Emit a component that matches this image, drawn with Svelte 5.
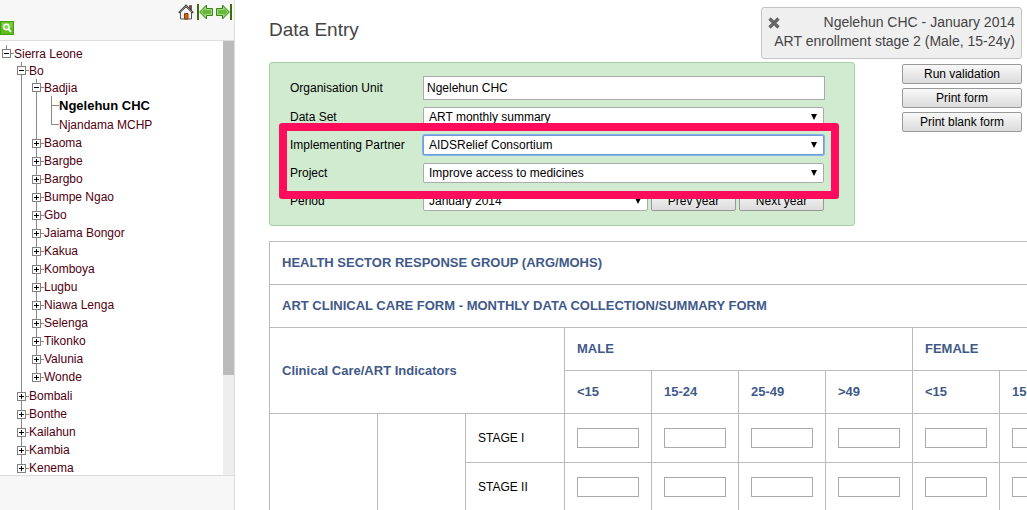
<script>
  const districts = ['Bombali', 'Bonthe', 'Kailahun', 'Kambia', 'Kenema'];
  const chiefdoms = [
    'Baoma', 'Bargbe', 'Bargbo', 'Bumpe Ngao', 'Gbo', 'Jaiama Bongor', 'Kakua',
    'Komboya', 'Lugbu', 'Niawa Lenga', 'Selenga', 'Tikonko', 'Valunia', 'Wonde'
  ];
  const ages = ['<15', '15-24', '25-49', '>49'];
  const columns = ['Male', 'Female'].flatMap((sex) => ages.map((age) => ({ sex, age })));
  const stages = ['STAGE I', 'STAGE II'];
  let unit = $state('Ngelehun CHC');
</script>

{#snippet branch(name, open)}
  <div class="row" class:open>
    <button class="toggle" aria-label={(open ? 'Collapse ' : 'Expand ') + name}>
      <svg viewBox="0 0 9 9" width="9" height="9" shape-rendering="crispEdges">
        <rect x="0.5" y="0.5" width="8" height="8" fill="#fff" stroke="#808080" />
        <path d={open ? 'M2 4.5h5' : 'M2 4.5h5M4.5 2v5'} stroke="#000" />
      </svg>
    </button>
    <span class="dash"></span>
    <a href="#unit">{name}</a>
  </div>
{/snippet}

<div class="shell">
  <aside>
    <div class="tools">
      <div class="nav">
        <button class="icon" aria-label="Home">
          <svg viewBox="0 0 16 16" width="16" height="16">
            <path d="M11.500 1.500h2v5h-2z" fill="#a33" stroke="#444" stroke-width=".7" />
            <path d="M2.500 8v7h11V8L8 3z" fill="#f4f4f4" stroke="#555" />
            <path d="M.8 8.800 8 1.600l7.200 7.200" fill="none" stroke="#444" stroke-width="1.800" />
            <path d="M1.800 8.200 8 2l6.200 6.200" fill="none" stroke="#bbb" stroke-width=".6" />
            <path d="M6.500 9.500H10V15H6.500z" fill="#d9680d" stroke="#81380a" />
          </svg>
        </button>
        <button class="icon" aria-label="Hide menu">
          <svg viewBox="0 0 16 16" width="16" height="16">
            <path d="M1 0v16" stroke="#347500" stroke-width="2" />
            <path d="M2.700 8 9.500 1V4.500h6v7h-6V15z" fill="#67b93b" stroke="#3b8419" />
            <path d="M4.200 8 8.500 3.500v2h6v5h-6v2z" fill="none" stroke="#a5dc80" />
          </svg>
        </button>
        <button class="icon" aria-label="Show menu">
          <svg viewBox="0 0 16 16" width="16" height="16">
            <path d="M15 0v16" stroke="#347500" stroke-width="2" />
            <path d="M13.300 8 6.500 1V4.500h-6v7h6V15z" fill="#67b93b" stroke="#3b8419" />
            <path d="M11.800 8 7.500 3.500v2h-6v5h6v2z" fill="none" stroke="#a5dc80" />
          </svg>
        </button>
      </div>
      <button class="icon" aria-label="Search">
        <svg viewBox="0 0 14 14" width="14" height="14">
          <rect x=".5" y=".5" width="13" height="13" fill="#5dbb1c" stroke="#42a012" />
          <path d="M1.500 1.500h11v5h-11z" fill="#7acb3e" />
          <circle cx="6.300" cy="6" r="2.800" fill="#8ed45c" stroke="#fff" stroke-width="1.400" />
          <path d="m8.500 8.200 2.500 2.700" stroke="#fff" stroke-width="1.900" />
        </svg>
      </button>
    </div>
    <div class="treebox">
      <ul class="tree">
        <li>
          {@render branch('Sierra Leone', true)}
          <ul>
            <li>
              {@render branch('Bo', true)}
              <ul>
                <li>
                  {@render branch('Badjia', true)}
                  <ul class="leaves">
                    <li><span class="dash"></span><a href="#unit" class="selected">Ngelehun CHC</a></li>
                    <li><span class="dash"></span><a href="#unit">Njandama MCHP</a></li>
                  </ul>
                </li>
                {#each chiefdoms as name}
                  <li>{@render branch(name, false)}</li>
                {/each}
              </ul>
            </li>
            {#each districts as name}
              <li>{@render branch(name, false)}</li>
            {/each}
          </ul>
        </li>
      </ul>
      <div class="track"><div class="thumb"></div></div>
    </div>
  </aside>

  <main>
    <h1>Data Entry</h1>

    <div class="top">
      <form class="criteria">
        <label for="unit">Organisation Unit</label>
        <input id="unit" type="text" bind:value={unit} />
        <label for="dataset">Data Set</label>
        <select id="dataset"><option>ART monthly summary</option></select>
        <label for="partner">Implementing Partner</label>
        <select id="partner" class="focused"><option>AIDSRelief Consortium</option></select>
        <label for="project">Project</label>
        <select id="project"><option>Improve access to medicines</option></select>
        <label for="period">Period</label>
        <div class="period">
          <select id="period"><option>January 2014</option></select>
          <button type="button" class="push">Prev year</button>
          <button type="button" class="push">Next year</button>
        </div>
        <div class="highlight"></div>
      </form>
      <div class="actions">
        <button class="push">Run validation</button>
        <button class="push">Print form</button>
        <button class="push">Print blank form</button>
      </div>
    </div>

    <div class="sheet">
      <table>
        <colgroup>
          <col class="group" /><col class="subgroup" /><col class="stage" />
          {#each columns as _}<col class="value" />{/each}
        </colgroup>
        <thead>
          <tr><th colspan="11">HEALTH SECTOR RESPONSE GROUP (ARG/MOHS)</th></tr>
          <tr><th colspan="11">ART CLINICAL CARE FORM - MONTHLY DATA COLLECTION/SUMMARY FORM</th></tr>
          <tr>
            <th colspan="3" rowspan="2">Clinical Care/ART Indicators</th>
            <th colspan="4">MALE</th>
            <th colspan="4">FEMALE</th>
          </tr>
          <tr>{#each columns as c}<th>{c.age}</th>{/each}</tr>
        </thead>
        <tbody>
          {#each stages as stage, i}
            <tr>
              {#if i === 0}<td rowspan="2"></td><td rowspan="2"></td>{/if}
              <td>{stage}</td>
              {#each columns as c}
                <td><input type="text" aria-label="{stage}, {c.sex} {c.age}" /></td>
              {/each}
            </tr>
          {/each}
        </tbody>
      </table>
    </div>

    <div class="notice">
      <div class="line">
        <button class="icon" aria-label="Close">
          <svg viewBox="0 0 12 12" width="12" height="12">
            <path d="m1.500 1.500 9 9m0-9-9 9" stroke="#666" stroke-width="3.400" />
          </svg>
        </button>
        <span>Ngelehun CHC - January 2014</span>
      </div>
      <div>ART enrollment stage 2 (Male, 15-24y)</div>
    </div>
  </main>
</div>

<style>
  :global(body) {
    margin: 0;
    background: #fff;
  }
  .shell {
    display: flex;
    height: 100vh;
    overflow: hidden;
    font: 12px/18px "Liberation Sans", Arial, sans-serif;
    color: #000;
  }
  .shell * {
    box-sizing: border-box;
  }
  button, input, select {
    font: inherit;
    color: #000;
    margin: 0;
  }
  svg {
    display: block;
  }
  .icon {
    display: block;
    padding: 0;
    border: 0;
    background: none;
  }

  aside {
    flex: 0 0 235px;
    display: flex;
    flex-direction: column;
    background: #f7f7f7;
    border-right: 1px solid #ddd;
    padding-bottom: 34px;
  }
  .tools {
    padding: 4px 2px 5px 0;
  }
  .nav {
    display: flex;
    justify-content: flex-end;
    gap: 3px;
    margin-bottom: 1px;
  }
  .treebox {
    flex: 1;
    min-height: 0;
    display: flex;
    background: #fff;
    border-top: 1px solid #ddd;
    border-bottom: 1px solid #ddd;
    overflow: hidden;
  }
  .tree {
    flex: 1;
    padding: 4px 0 0;
  }
  .track {
    width: 11px;
    background: #eee;
  }
  .thumb {
    height: 77%;
    background: #bbb;
  }
  ul {
    list-style: none;
    margin: 0;
    padding: 0;
  }
  ul ul {
    padding: 0 0 1px 15px;
  }
  ul ul.leaves {
    padding-bottom: 0;
  }
  li {
    background: linear-gradient(#888, #888) 6px 0 / 1px 100% no-repeat;
  }
  li:last-child {
    background-size: 1px 9px;
  }
  .row {
    display: flex;
    align-items: center;
    height: 18px;
    padding-left: 2px;
  }
  .row.open {
    height: 17px;
  }
  .toggle {
    padding: 0;
    border: 0;
    background: none;
  }
  .dash {
    width: 3px;
    height: 1px;
    background: #888;
  }
  .leaves li {
    display: flex;
    align-items: center;
    height: 19px;
    padding-left: 6px;
  }
  .leaves .dash {
    width: 8px;
  }
  a {
    color: #500010;
    text-decoration: none;
    white-space: nowrap;
  }
  a.selected {
    color: #000;
    font-weight: bold;
    font-size: 13px;
  }

  main {
    flex: 1;
    min-width: 0;
    position: relative;
    padding: 18px 0 0 34px;
  }
  h1 {
    margin: 0 0 20px;
    font-size: 19px;
    line-height: 24px;
    font-weight: normal;
    color: #444;
  }
  .top {
    display: flex;
    justify-content: space-between;
    align-items: flex-start;
    padding-right: 5px;
    margin-bottom: 15px;
  }
  .criteria {
    position: relative;
    flex: 0 1 586px;
    display: grid;
    grid-template-columns: 133px 1fr;
    row-gap: 8px;
    align-items: center;
    padding: 13px 30px 14px 20px;
    background: #d0ebd0;
    border: 1px solid #a8d3a8;
    border-radius: 3px;
  }
  .criteria input {
    height: 24px;
    padding: 0 3px;
    border: 1px solid #aaa;
    margin: 0 -1px -1px 0;
  }
  select {
    appearance: none;
    width: 100%;
    height: 20px;
    padding: 0 24px 0 5px;
    border: 1px solid #aaa;
    border-radius: 2px;
    background: #fff url("data:image/svg+xml,%3Csvg xmlns='http://www.w3.org/2000/svg' width='6' height='6'%3E%3Cpath d='M0 0h6L3 6z'/%3E%3C/svg%3E") right 6px center no-repeat;
  }
  select.focused {
    border-color: #6f9bd8;
    box-shadow: 0 0 0 1px #86b2ea;
  }
  .period {
    display: grid;
    grid-template-columns: 1fr 85px 85px;
    gap: 3px;
  }
  .push {
    height: 20px;
    padding: 0 4px;
    border: 1px solid #999;
    border-radius: 2px;
    background: linear-gradient(#f8f8f8, #dcdcdc);
    line-height: 16px;
    white-space: nowrap;
  }
  .highlight {
    position: absolute;
    inset: 60px 15px 26px 9px;
    border: 8px solid #ff0d5c;
    border-radius: 3px;
    pointer-events: none;
  }
  .actions {
    flex: 0 0 120px;
    display: grid;
    gap: 4px;
    padding-top: 2px;
  }

  .sheet {
    overflow: hidden;
  }
  table {
    width: 991px;
    table-layout: fixed;
    border-collapse: collapse;
  }
  .group {
    width: 108px;
  }
  .subgroup {
    width: 88px;
  }
  .stage {
    width: 99px;
  }
  .value {
    width: 87px;
  }
  th, td {
    border: 1px solid #bbb;
    padding: 0 12px;
    text-align: left;
  }
  th {
    height: 43px;
    font-size: 13px;
    color: #3f5a89;
  }
  td {
    height: 49px;
  }
  td input {
    display: block;
    width: 100%;
    height: 20px;
    border: 1px solid #aaa;
  }

  .notice {
    position: absolute;
    top: 7px;
    right: 5px;
    min-width: 261px;
    padding: 5px 6px 7px;
    border: 1px solid #c4c4c4;
    border-radius: 3px;
    background: #efefef;
    color: #444;
    font-size: 14px;
    line-height: 19px;
    text-align: right;
    white-space: nowrap;
  }
  .line {
    display: flex;
    justify-content: space-between;
    align-items: center;
  }
</style>
